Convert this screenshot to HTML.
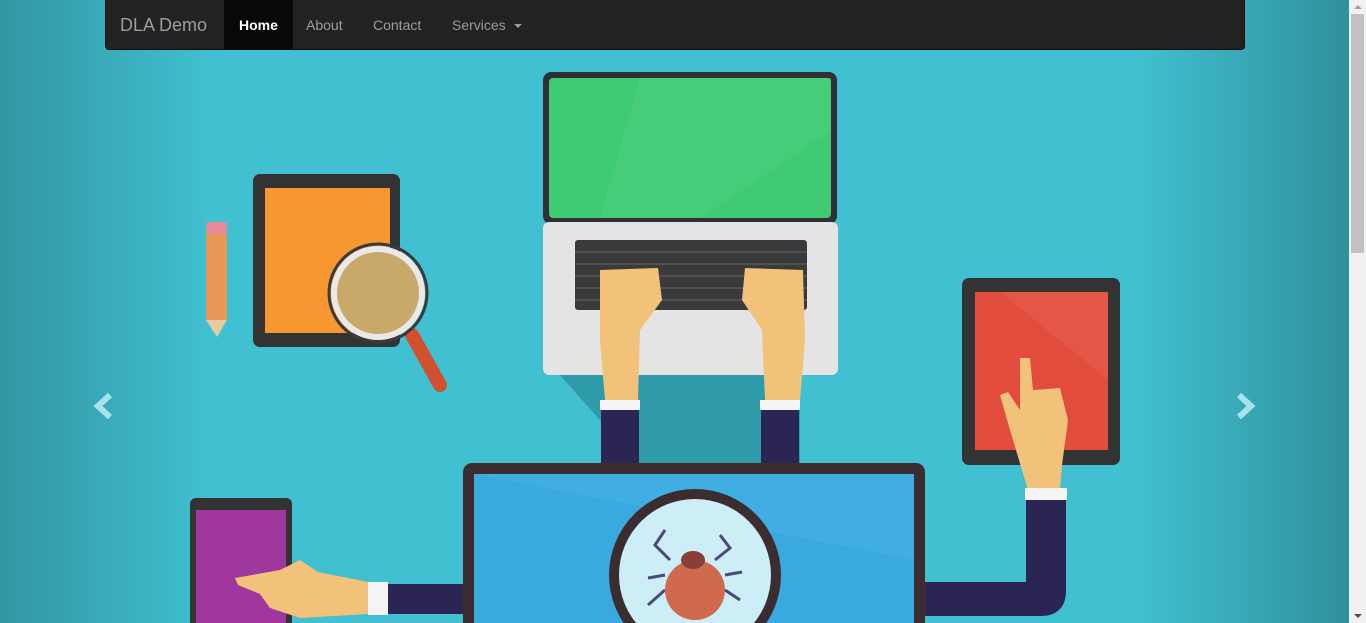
<!DOCTYPE html>
<html><head><style>
html,body{margin:0;padding:0;width:1366px;height:623px;overflow:hidden;font-family:"Liberation Sans",Arial,sans-serif}
.bg{position:absolute;left:0;top:0;width:1349px;height:623px;background:#40c0d0}
.bg:before{content:"";position:absolute;left:0;top:0;width:210px;height:623px;background:linear-gradient(to right,rgba(0,0,0,.22),rgba(0,0,0,0))}
.bg:after{content:"";position:absolute;right:0;top:0;width:210px;height:623px;background:linear-gradient(to left,rgba(0,0,0,.25),rgba(0,0,0,0))}
.nav{position:absolute;left:105px;top:0;width:1140px;height:50px;background:#222;border:1px solid #080808;border-top:none;border-radius:0 0 4px 4px;box-sizing:border-box}
.nav a{position:absolute;top:0;height:50px;line-height:50px;color:#9d9d9d;font-size:14px;text-decoration:none}
.brand{font-size:18px!important}
.active{background:#080808;color:#fff!important;padding:0 15px;font-weight:bold}
.caret{display:inline-block;width:0;height:0;border-left:4px solid transparent;border-right:4px solid transparent;border-top:4px solid #9d9d9d;vertical-align:middle;margin-left:4px}
.sb{position:absolute;left:1349px;top:0;width:17px;height:623px;background:#f1f1f1}
.thumb{position:absolute;left:2px;top:14px;width:13px;height:239px;background:#c1c1c1}
.up{position:absolute;left:5px;top:5px;border-left:4px solid transparent;border-right:4px solid transparent;border-bottom:4px solid #a3a3a3}
.dn{position:absolute;left:5px;bottom:5px;border-left:4px solid transparent;border-right:4px solid transparent;border-top:4px solid #505050}
svg{overflow:hidden}
</style></head><body>
<div class="bg"></div>
<svg style="position:absolute;left:0;top:0" width="1349" height="623">
<polygon points="560,375 800,375 800,465 640,465" fill="#2f9aa8"/>
<rect x="543" y="72" width="294" height="152" rx="8" fill="#2f2f35"/>
<rect x="549" y="78" width="282" height="140" rx="4" fill="#3ecb73"/>
<polygon points="640,78 831,78 831,130 700,218 600,218" fill="#4fd080" opacity=".5"/>
<rect x="543" y="222" width="295" height="153" rx="6" fill="#e4e4e4"/>
<rect x="575" y="240" width="232" height="70" rx="3" fill="#3a3a3a"/>
<g stroke="#666" stroke-width="1">
<line x1="575" y1="252" x2="807" y2="252"/><line x1="575" y1="264" x2="807" y2="264"/><line x1="575" y1="276" x2="807" y2="276"/><line x1="575" y1="288" x2="807" y2="288"/><line x1="575" y1="300" x2="807" y2="300"/>
</g>
<path d="M600,270 L658,268 L662,300 L640,330 L638,400 L605,400 L600,340 Z" fill="#f3c27a"/>
<path d="M745,268 L803,270 L805,340 L800,400 L765,400 L762,330 L742,300 Z" fill="#f3c27a"/>
<rect x="600" y="400" width="40" height="10" fill="#f4f4f4"/>
<rect x="760" y="400" width="40" height="10" fill="#f4f4f4"/>
<rect x="601" y="410" width="38" height="56" fill="#2a2552"/>
<rect x="761" y="410" width="38" height="56" fill="#2a2552"/>
<rect x="253" y="174" width="147" height="173" rx="7" fill="#343334"/>
<rect x="265" y="188" width="125" height="145" fill="#f7972f"/>
<line x1="412" y1="335" x2="440" y2="385" stroke="#d2502f" stroke-width="14" stroke-linecap="round"/>
<circle cx="378" cy="293" r="44" fill="#c8a96a" stroke="#e9e9e9" stroke-width="6"/>
<circle cx="378" cy="293" r="49" fill="none" stroke="#3a3a3a" stroke-width="3"/>
<rect x="206" y="222" width="21" height="12" rx="3" fill="#e88a9a"/>
<rect x="206" y="234" width="21" height="86" fill="#e9985a"/>
<polygon points="206,320 227,320 217,337" fill="#e9c9a0"/>
<rect x="962" y="278" width="158" height="187" rx="7" fill="#343334"/>
<rect x="975" y="292" width="133" height="158" fill="#e14c3c"/>
<polygon points="1000,292 1108,292 1108,380" fill="#e86050" opacity=".5"/>
<path d="M1020,358 L1030,358 L1033,390 L1060,388 L1068,420 L1062,465 L1060,490 L1028,490 L1010,430 L1000,395 L1008,392 L1020,410 Z" fill="#f3c27a"/>
<rect x="1025" y="488" width="42" height="12" fill="#f4f4f4"/>
<path d="M1026,500 L1066,500 L1066,590 Q1066,616 1040,616 L920,616 L920,582 L1026,582 Z" fill="#2a2552"/>
<rect x="190" y="498" width="102" height="140" rx="6" fill="#343334"/>
<rect x="196" y="510" width="90" height="120" fill="#a0379f"/>
<path d="M235,578 L280,570 L300,560 L318,572 L368,582 L368,614 L300,618 L270,608 L260,594 L238,585 Z" fill="#f3c27a"/>
<rect x="368" y="582" width="20" height="33" fill="#f4f4f4"/>
<rect x="388" y="584" width="80" height="30" fill="#2a2552"/>
<rect x="463" y="463" width="462" height="180" rx="9" fill="#3b2d2f"/>
<rect x="474" y="474" width="440" height="170" fill="#3aa9df"/>
<polygon points="474,474 914,474 914,560" fill="#44b2e6" opacity=".6"/>
<circle cx="695" cy="575" r="86" fill="#3b2d2f"/>
<circle cx="695" cy="575" r="76" fill="#cdeef6"/>
<g stroke="#4a4a7a" stroke-width="3" fill="none">
<path d="M670,560 L655,545 L665,530"/><path d="M715,560 L730,548 L720,535"/><path d="M665,590 L648,605"/><path d="M725,590 L740,600"/><path d="M665,575 L648,578"/><path d="M725,575 L742,572"/>
</g>
<ellipse cx="695" cy="590" rx="30" ry="30" fill="#cf6a4f"/>
<ellipse cx="693" cy="560" rx="12" ry="9" fill="#8a3e3a"/>
<path d="M110,395 L98,406 L110,417" stroke="#a9e2ea" stroke-width="6" fill="none"/>
<path d="M1239,395 L1251,406 L1239,417" stroke="#a9e2ea" stroke-width="6" fill="none"/>
</svg>
<div class="nav">
<a class="brand" style="left:14px">DLA Demo</a>
<a class="active" style="left:118px">Home</a>
<a style="left:200px">About</a>
<a style="left:267px">Contact</a>
<a style="left:346px">Services <span class="caret"></span></a>
</div>
<div class="sb"><div class="up"></div><div class="thumb"></div><div class="dn"></div></div>
</body></html>
